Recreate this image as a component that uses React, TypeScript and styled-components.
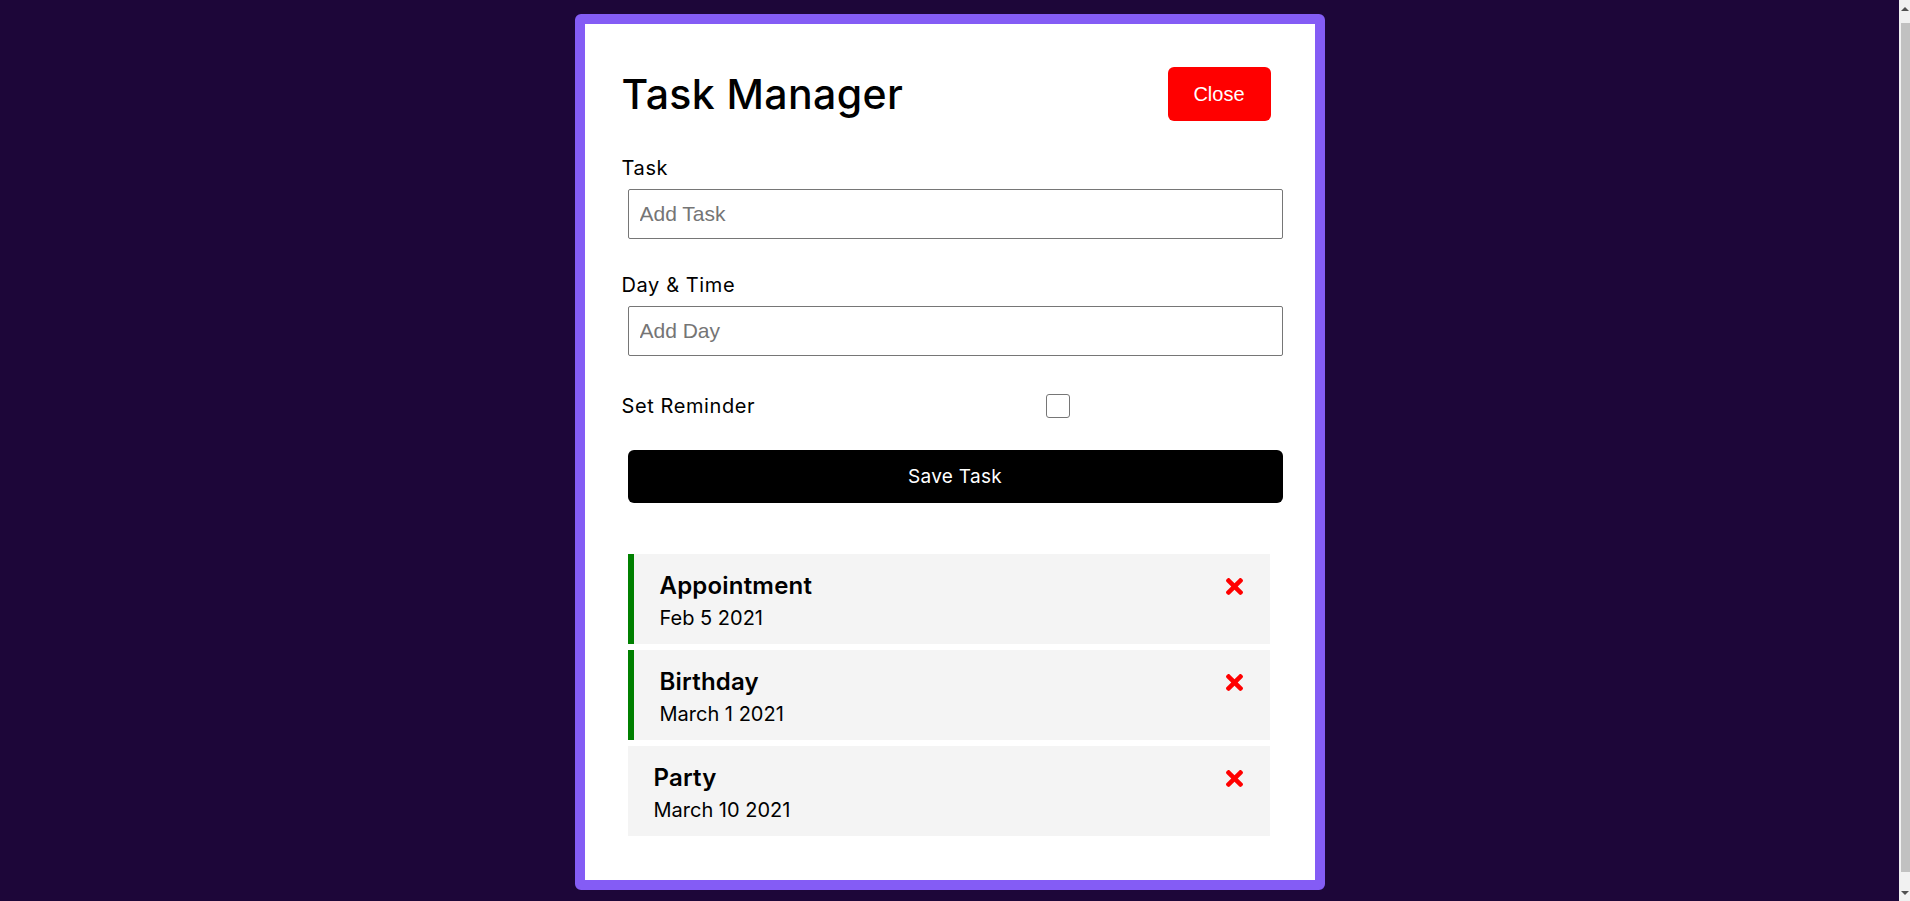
import styled, { createGlobalStyle } from 'styled-components';

const GlobalStyle = createGlobalStyle`
    * {
        box-sizing: border-box;
    }

    body {
        margin: 0;
        background: #1d0639;
        font-family: Inter, 'Noto Sans', sans-serif;
        color: #000;
    }
`;

const Page = styled.div`
    padding: 14px 11px 30px 0;
`;

const Container = styled.main`
    width: 750px;
    margin: 0 auto;
    background: #fff;
    border: 10px solid #845cf5;
    border-radius: 6px;
    padding: 43px 39px 44px 37px;
`;

const Header = styled.header`
    display: flex;
    align-items: center;
    justify-content: space-between;
    height: 54px;
`;

const Title = styled.h1`
    margin: 0;
    font-size: 41px;
    line-height: 48px;
    font-weight: 500;
    letter-spacing: 0.4px;
`;

const CloseButton = styled.button`
    width: 103px;
    height: 54px;
    margin-right: 5px;
    border: none;
    border-radius: 6px;
    background: #ff0000;
    color: #fff;
    font-family: 'Liberation Sans', Arial, sans-serif;
    font-size: 20px;
    cursor: pointer;
`;

const Form = styled.form`
    margin: 32px 0 51px;
`;

const Field = styled.div`
    & + & {
        margin-top: 31px;
    }
`;

const Label = styled.label`
    display: block;
    font-size: 20px;
    line-height: 30px;
    letter-spacing: 0.6px;
`;

const Input = styled.input`
    display: block;
    width: 655px;
    height: 50px;
    margin: 6px 0 0 6px;
    padding: 0 11px;
    border: 1px solid #767676;
    border-radius: 2px;
    font-family: 'Liberation Sans', Arial, sans-serif;
    font-size: 21px;

    &::placeholder {
        color: #757575;
    }
`;

const CheckRow = styled.div`
    display: grid;
    grid-template-columns: 1fr 2fr;
    align-items: center;
    height: 30px;
    margin-top: 35px;
`;

const Checkbox = styled.input`
    appearance: none;
    justify-self: center;
    width: 24px;
    height: 24px;
    margin: 0;
    border: 1px solid #767676;
    border-radius: 3px;
    background: #fff;
`;

const SaveButton = styled.button`
    display: block;
    width: 655px;
    height: 53px;
    margin: 29px 0 0 6px;
    border: none;
    border-radius: 6px;
    background: #000;
    color: #fff;
    font-family: inherit;
    font-size: 19px;
    letter-spacing: 0.3px;
    cursor: pointer;
`;

const TaskList = styled.div`
    display: flex;
    flex-direction: column;
    gap: 6px;
`;

const TaskCard = styled.div<{ $reminder: boolean }>`
    height: 90px;
    margin: 0 6px;
    padding: 17px 27px 12px 26px;
    background: #f4f4f4;
    border-left: ${({ $reminder }) => ($reminder ? '6px solid #008000' : 'none')};
`;

const TaskTitle = styled.h3`
    display: flex;
    align-items: center;
    justify-content: space-between;
    margin: 0 0 3px;
    font-size: 24px;
    line-height: 30px;
    font-weight: 600;
    letter-spacing: 0.2px;
`;

const TaskDate = styled.p`
    margin: 0;
    font-size: 20px;
    line-height: 28px;
`;

// window scrollbar as it shows in the reference capture
const ScrollTrack = styled.div`
    position: fixed;
    top: 0;
    right: 0;
    bottom: 0;
    width: 11px;
    display: flex;
    flex-direction: column;
    background: #f1f1f1;
`;

const ScrollArrow = styled.div<{ $down?: boolean }>`
    height: 17px;
    display: flex;
    align-items: center;
    justify-content: center;

    &::before {
        content: '';
        border-left: 4px solid transparent;
        border-right: 4px solid transparent;
        ${({ $down }) => ($down ? 'border-top: 4px solid #505050;' : 'border-bottom: 4px solid #505050;')}
    }
`;

const ScrollThumb = styled.div`
    flex: 1;
    margin: 6px 0 12px 2px;
    background: #c1c1c1;
`;

const DeleteIcon = () => (
    <svg width="17" height="17" viewBox="0 80 352 352" fill="#ff0000" style={{ cursor: 'pointer' }}>
        <path d="M242.72 256l100.07-100.07c12.28-12.28 12.28-32.19 0-44.48l-22.24-22.24c-12.28-12.28-32.19-12.28-44.48 0L176 189.28 75.93 89.21c-12.28-12.28-32.19-12.28-44.48 0L9.21 111.45c-12.28 12.28-12.28 32.19 0 44.48L109.28 256 9.21 356.07c-12.28 12.28-12.28 32.19 0 44.48l22.24 22.24c12.28 12.28 32.2 12.28 44.48 0L176 322.72l100.07 100.07c12.28 12.28 32.2 12.28 44.48 0l22.24-22.24c12.28-12.28 12.28-32.19 0-44.48L242.72 256z" />
    </svg>
);

const tasks = [
    { id: 1, text: 'Appointment', day: 'Feb 5 2021', reminder: true },
    { id: 2, text: 'Birthday', day: 'March 1 2021', reminder: true },
    { id: 3, text: 'Party', day: 'March 10 2021', reminder: false },
];

export default function App() {
    return (
        <>
            <GlobalStyle />
            <Page>
                <Container>
                    <Header>
                        <Title>Task Manager</Title>
                        <CloseButton>Close</CloseButton>
                    </Header>
                    <Form onSubmit={e => e.preventDefault()}>
                        <Field>
                            <Label>Task</Label>
                            <Input type="text" placeholder="Add Task" />
                        </Field>
                        <Field>
                            <Label>Day &amp; Time</Label>
                            <Input type="text" placeholder="Add Day" />
                        </Field>
                        <CheckRow>
                            <Label>Set Reminder</Label>
                            <Checkbox type="checkbox" />
                        </CheckRow>
                        <SaveButton type="submit">Save Task</SaveButton>
                    </Form>
                    <TaskList>
                        {tasks.map(task => (
                            <TaskCard key={task.id} $reminder={task.reminder}>
                                <TaskTitle>
                                    {task.text}
                                    <DeleteIcon />
                                </TaskTitle>
                                <TaskDate>{task.day}</TaskDate>
                            </TaskCard>
                        ))}
                    </TaskList>
                </Container>
            </Page>
            <ScrollTrack>
                <ScrollArrow />
                <ScrollThumb />
                <ScrollArrow $down />
            </ScrollTrack>
        </>
    );
}
